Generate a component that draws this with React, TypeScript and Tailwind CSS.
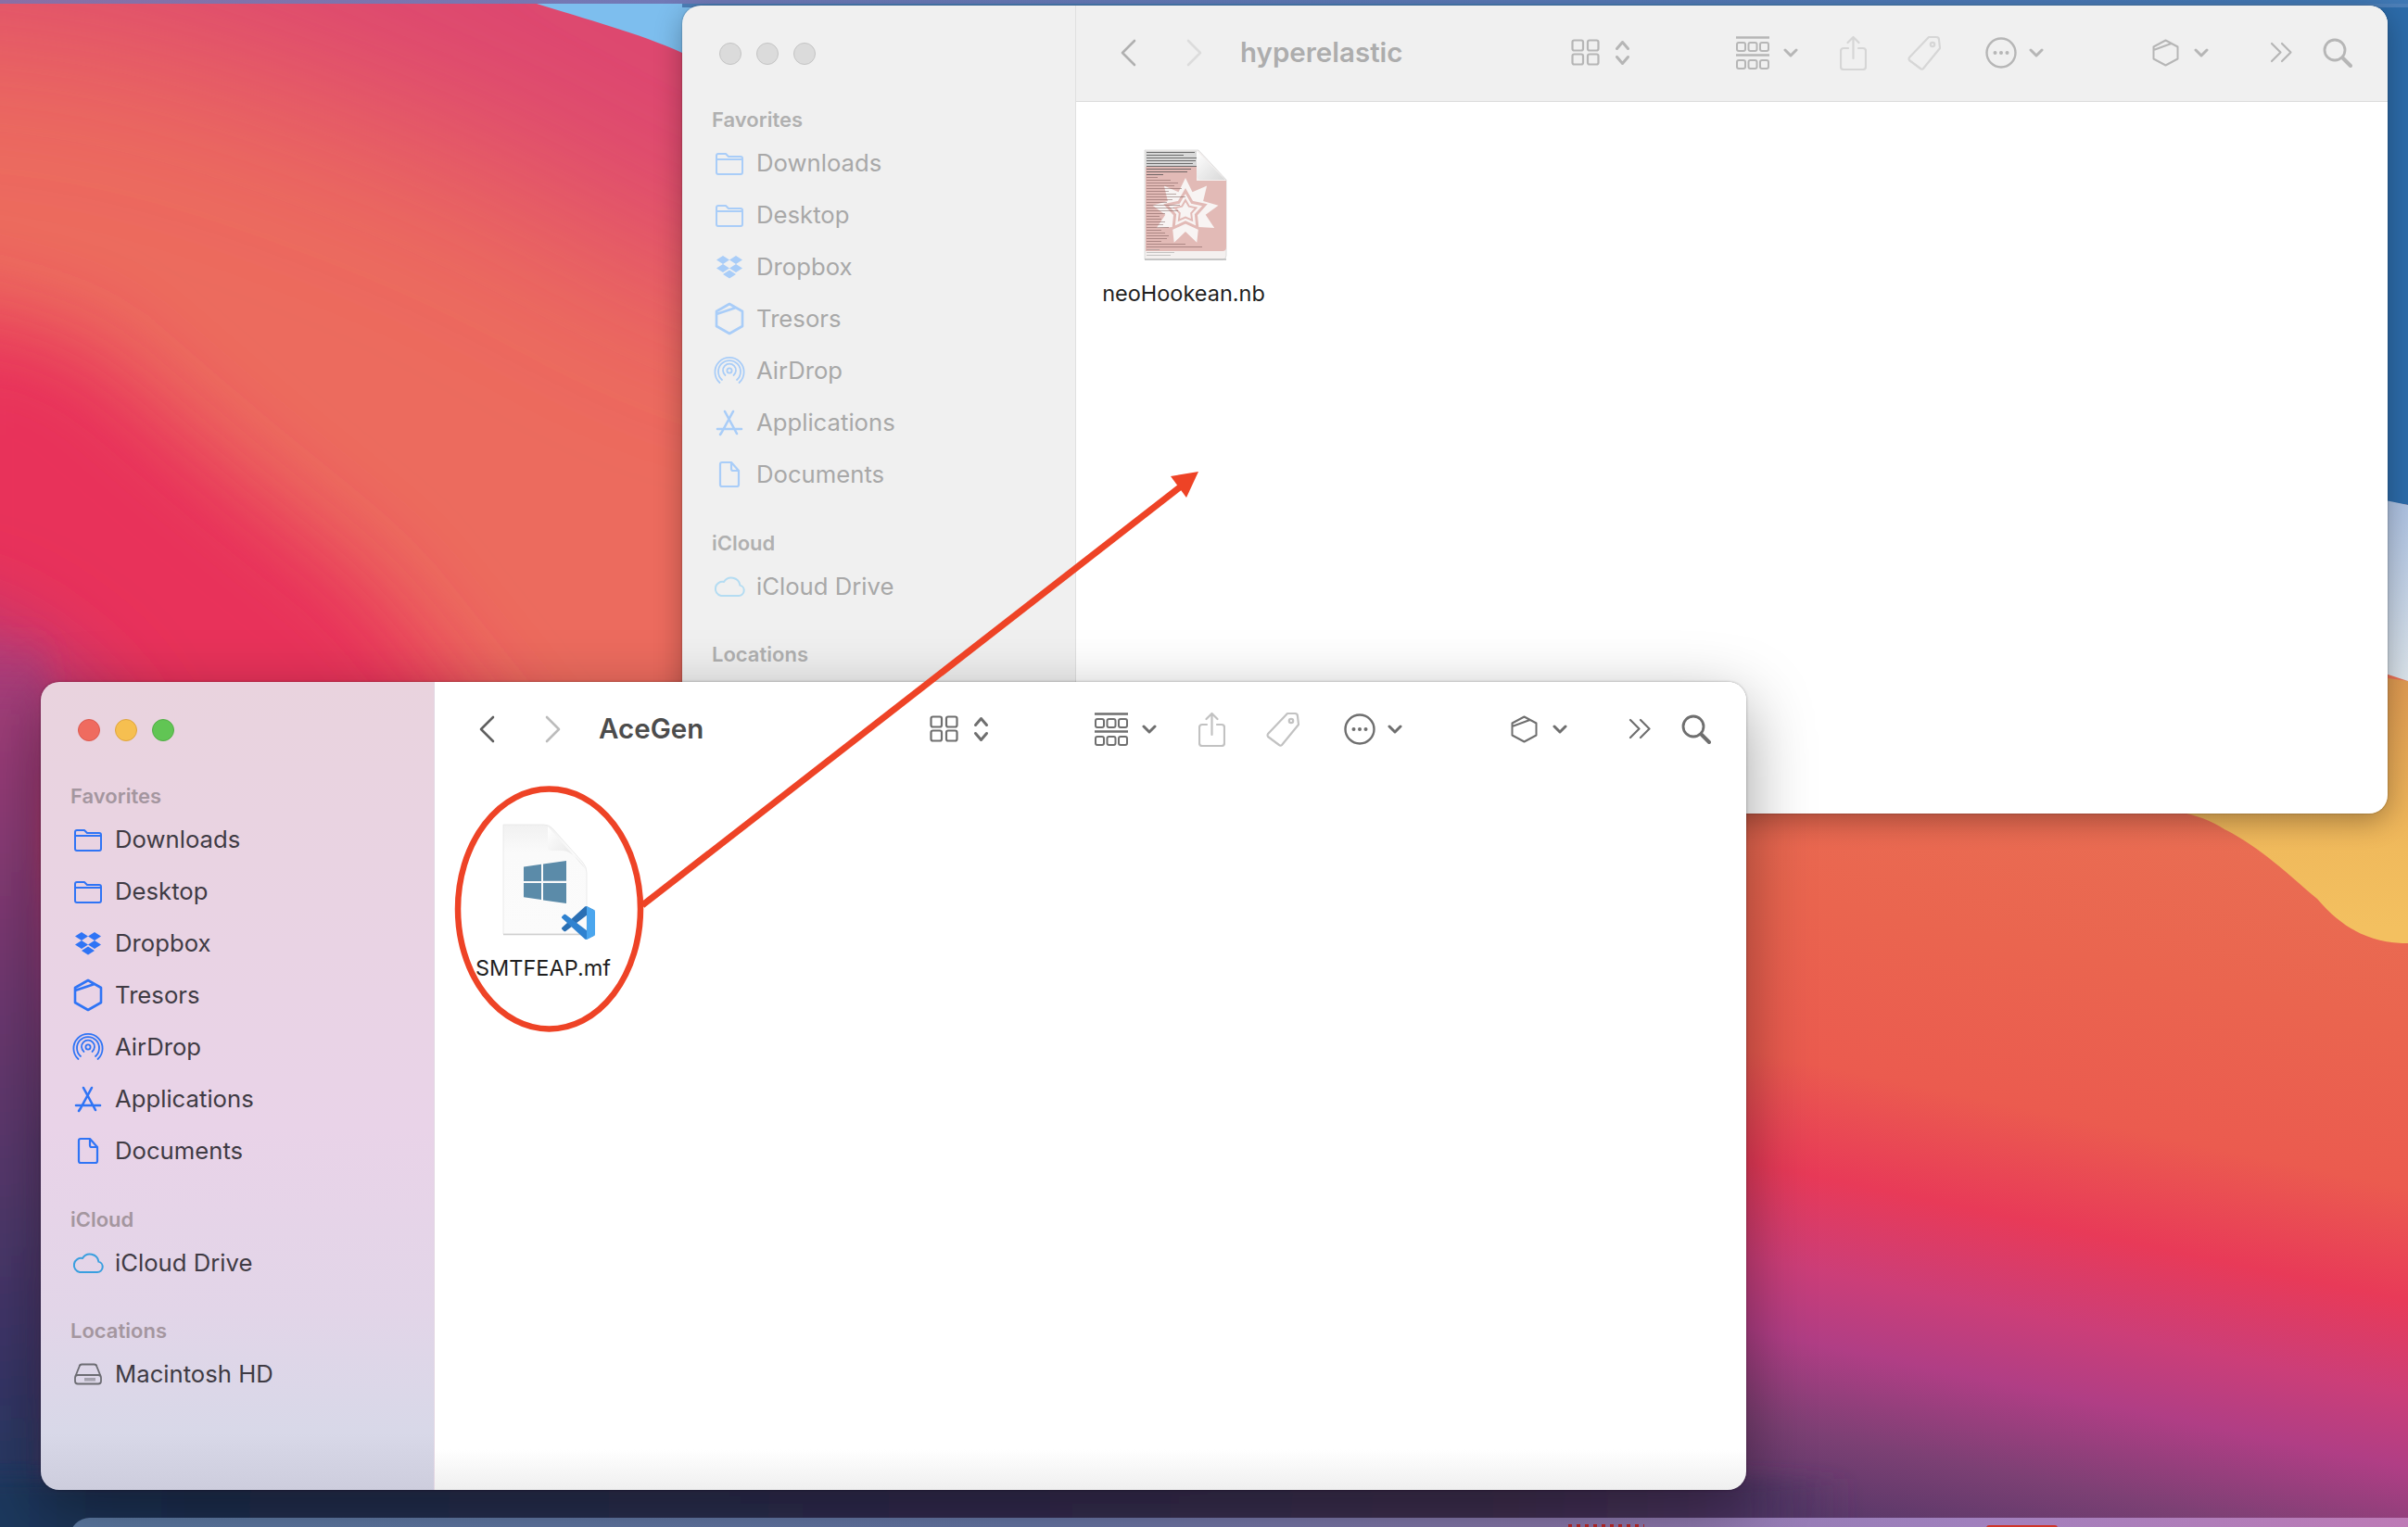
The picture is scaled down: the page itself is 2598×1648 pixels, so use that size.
import React from "react";

type Active = { active: boolean };

const Folder = () => (
  <svg width="40" height="40" viewBox="0 0 40 40" fill="none" stroke="currentColor" strokeWidth="2">
    <path d="M6 12a2 2 0 0 1 2-2h8l3 3h13a2 2 0 0 1 2 2v15a2 2 0 0 1-2 2H8a2 2 0 0 1-2-2zM6 16h28" strokeLinejoin="round" />
  </svg>
);
const Dropbox = () => (
  <svg width="40" height="40" viewBox="0 0 40 40" fill="currentColor">
    <path d="M13 8l7 4.5-7 4.5-7-4.5zM27 8l7 4.5-7 4.5-7-4.5zM13 17l7 4.5-7 4.5-7-4.5zM27 17l7 4.5-7 4.5-7-4.5zM20 23.5l7 4.5-7 4.5-7-4.5z" />
  </svg>
);
const Tresors = () => (
  <svg width="40" height="40" viewBox="0 0 40 40" fill="none" stroke="currentColor" strokeWidth="2.6" strokeLinejoin="round">
    <path d="M20 4l14 8v16l-14 8-14-8V12zM6 15l21-7" />
  </svg>
);
const AirDrop = () => (
  <svg width="40" height="40" viewBox="0 0 40 40" fill="none" stroke="currentColor" strokeWidth="1.8" strokeLinecap="round">
    <circle cx="20" cy="20" r="2.6" />
    <path d="M15.5 25a7 7 0 1 1 9 0M12 30a12 12 0 1 1 16 0M9.5 33a15.6 15.6 0 1 1 21 0" />
  </svg>
);
const Apps = () => (
  <svg width="40" height="40" viewBox="0 0 40 40" fill="none" stroke="currentColor" strokeWidth="2.6" strokeLinecap="round">
    <path d="M15 8l13 24M24 8L12 30M7 27h26M10 33l2-3" />
  </svg>
);
const Doc = () => (
  <svg width="40" height="40" viewBox="0 0 40 40" fill="none" stroke="currentColor" strokeWidth="2.2" strokeLinejoin="round">
    <path d="M10 9a2 2 0 0 1 2-2h10l8 9v15a2 2 0 0 1-2 2H12a2 2 0 0 1-2-2zM22 7v7a2 2 0 0 0 2 2h6" />
  </svg>
);
const Cloud = () => (
  <svg width="40" height="40" viewBox="0 0 40 40" fill="none" stroke="currentColor" strokeWidth="2">
    <path d="M11 30h19a5.8 5.8 0 0 0 1.4-11.4A9.5 9.5 0 0 0 14 15a7.6 7.6 0 0 0-3 15z" />
  </svg>
);
const Disk = () => (
  <svg width="40" height="40" viewBox="0 0 40 40" fill="none" stroke="currentColor" strokeWidth="1.8">
    <path d="M6.5 22l4-10a3 3 0 0 1 3-2.500h13a3 3 0 0 1 3 2.500l4 10" />
    <rect x="6" y="21" width="28" height="9.500" rx="3" />
    <path d="M17 24v3.500M19 24v3.500M21 24v3.500M23 24v3.500M25 24v3.500M27 24v3.500" strokeWidth="1" />
  </svg>
);

const favorites: [string, React.FC][] = [
  ["Downloads", Folder],
  ["Desktop", Folder],
  ["Dropbox", Dropbox],
  ["Tresors", Tresors],
  ["AirDrop", AirDrop],
  ["Applications", Apps],
  ["Documents", Doc],
];

function Heading({ label, active, className }: Active & { label: string; className?: string }) {
  return (
    <div
      className={`h-[37px] flex items-center pl-[32px] text-[22px] font-semibold ${className ?? ""} ${
        active ? "text-[#a4969f]" : "text-[#b0b0b0]"
      }`}
    >
      {label}
    </div>
  );
}

function Row({ label, Icon, active, tone }: Active & { label: string; Icon: React.FC; tone?: "cloud" | "disk" }) {
  const iconColor = active
    ? tone === "cloud"
      ? "text-[#3a9fdf]"
      : tone === "disk"
        ? "text-[#6c6c72]"
        : "text-[#2f74f5]"
    : tone === "cloud"
      ? "text-[#b4dcf2]"
      : tone === "disk"
        ? "text-[#bdbdbd]"
        : "text-[#a9cdf8]";
  return (
    <div className={`h-[56px] flex items-center pl-[31px] text-[25.700px] ${active ? "text-[#3f3b44]" : "text-[#a8a8a8]"}`}>
      <span className={`w-[40px] h-[40px] shrink-0 ${iconColor}`}>
        <Icon />
      </span>
      <span className="ml-[9px] pt-[1px] whitespace-nowrap">{label}</span>
    </div>
  );
}

function Sidebar({ active }: Active) {
  return (
    <aside
      className={`w-[425px] shrink-0 border-r flex flex-col ${
        active
          ? "border-[#e2d6e2] bg-[linear-gradient(180deg,#e9d3de_0%,#e9d3e8_55%,#e2d5e8_78%,#d8d8e8_93%,#cdcddd_100%)]"
          : "border-[#e0e0e0] bg-[#f0f0f0]"
      }`}
    >
      <div className="h-[105px] pl-[40px] pb-[2px] flex items-center gap-[16px]">
        <span className={`w-[24px] h-[24px] rounded-full border ${active ? "bg-[#ef6b5f] border-[#dc5a50]" : "bg-[#dbdbdb] border-[#c4c4c4]"}`} />
        <span className={`w-[24px] h-[24px] rounded-full border ${active ? "bg-[#f6bf50] border-[#dfa53e]" : "bg-[#dbdbdb] border-[#c4c4c4]"}`} />
        <span className={`w-[24px] h-[24px] rounded-full border ${active ? "bg-[#61c554] border-[#52ae46]" : "bg-[#dbdbdb] border-[#c4c4c4]"}`} />
      </div>
      <Heading label="Favorites" active={active} />
      {favorites.map(([label, Icon]) => (
        <Row key={label} label={label} Icon={Icon} active={active} />
      ))}
      <Heading label="iCloud" active={active} className="mt-[28px]" />
      <Row label="iCloud Drive" Icon={Cloud} active={active} tone="cloud" />
      <Heading label="Locations" active={active} className="mt-[27px]" />
      <Row label="Macintosh HD" Icon={Disk} active={active} tone="disk" />
    </aside>
  );
}

const Chev = ({ className }: { className?: string }) => (
  <svg width="16" height="10" viewBox="0 0 16 10" fill="none" stroke="currentColor" strokeWidth="3" strokeLinecap="round" strokeLinejoin="round" className={className}>
    <path d="M2 2l6 6 6-6" />
  </svg>
);

function Toolbar({ title, active }: Active & { title: string }) {
  const main = active ? "text-[#6f6f6f]" : "text-[#b6b6b6]";
  const dim = active ? "text-[#c2c2c2]" : "text-[#d6d6d6]";
  return (
    <header className={`h-[104px] shrink-0 pb-[2px] pl-[47px] flex items-center border-b ${active ? "border-white bg-white" : "border-[#dcdcdc] bg-[#f0f0f0]"}`}>
      <svg width="18" height="30" viewBox="0 0 18 30" fill="none" stroke="currentColor" strokeWidth="2.600" strokeLinecap="round" strokeLinejoin="round" className={active ? "text-[#606060]" : "text-[#b0b0b0]"}>
        <path d="M16 2L3 15l13 13" />
      </svg>
      <svg width="18" height="30" viewBox="0 0 18 30" fill="none" stroke="currentColor" strokeWidth="2.600" strokeLinecap="round" strokeLinejoin="round" className={`ml-[54px] ${active ? "text-[#bcbcbc]" : "text-[#dcdcdc]"}`}>
        <path d="M2 2l13 13L2 28" />
      </svg>
      <div className={`ml-[40px] w-[357px] text-[29.500px] font-semibold leading-none pt-[1px] ${active ? "text-[#4c4c4c]" : "text-[#adadad]"}`}>{title}</div>
      <svg width="31" height="29" viewBox="0 0 31 29" fill="none" stroke="currentColor" strokeWidth="2.200" className={main}>
        <rect x="1.500" y="1.500" width="11.500" height="11" rx="2" />
        <rect x="18" y="1.500" width="11.500" height="11" rx="2" />
        <rect x="1.500" y="16.500" width="11.500" height="11" rx="2" />
        <rect x="18" y="16.500" width="11.500" height="11" rx="2" />
      </svg>
      <svg width="17" height="28" viewBox="0 0 17 28" fill="none" stroke="currentColor" strokeWidth="3" strokeLinecap="round" strokeLinejoin="round" className={`ml-[16px] ${main}`}>
        <path d="M2.500 9.500l6-7 6 7M2.500 18.500l6 7 6-7" />
      </svg>
      <svg width="36" height="36" viewBox="0 0 36 36" fill="none" stroke="currentColor" strokeWidth="2" className={`ml-[114px] ${main}`}>
        <path d="M0 1.500h36M0 20.500h36" strokeWidth="2.400" />
        <rect x="1" y="7" width="9" height="9" rx="2" />
        <rect x="13.500" y="7" width="9" height="9" rx="2" />
        <rect x="26" y="7" width="9" height="9" rx="2" />
        <rect x="1" y="26" width="9" height="9" rx="2" />
        <rect x="13.500" y="26" width="9" height="9" rx="2" />
        <rect x="26" y="26" width="9" height="9" rx="2" />
      </svg>
      <span className={`ml-[15px] ${main}`}><Chev /></span>
      <svg width="29" height="38" viewBox="0 0 29 38" fill="none" stroke="currentColor" strokeWidth="2.200" strokeLinecap="round" strokeLinejoin="round" className={`ml-[45px] ${dim}`}>
        <path d="M9 14H4a3 3 0 0 0-3 3v17a3 3 0 0 0 3 3h21a3 3 0 0 0 3-3V17a3 3 0 0 0-3-3h-5M14.500 25V2M8.500 8l6-6 6 6" />
      </svg>
      <svg width="36" height="38" viewBox="0 0 36 38" fill="none" stroke="currentColor" strokeWidth="2.200" strokeLinejoin="round" className={`ml-[44px] ${dim}`}>
        <path d="M23 2h8a3 3 0 0 1 3 3l1 9-18 22a2 2 0 0 1-3 0L2 27a3 3 0 0 1 0-3z" />
        <circle cx="27" cy="10" r="2.200" />
      </svg>
      <svg width="34" height="34" viewBox="0 0 34 34" fill="none" className={`ml-[48px] ${main}`}>
        <circle cx="17" cy="17" r="15.500" stroke="currentColor" strokeWidth="2.400" />
        <circle cx="10.500" cy="17" r="2" fill="currentColor" />
        <circle cx="17" cy="17" r="2" fill="currentColor" />
        <circle cx="23.500" cy="17" r="2" fill="currentColor" />
      </svg>
      <span className={`ml-[13px] ${main}`}><Chev /></span>
      <svg width="29" height="30" viewBox="0 0 29 30" fill="none" stroke="currentColor" strokeWidth="2" strokeLinejoin="round" className={`ml-[117px] ${main}`}>
        <path d="M14.500 1.500l13 7v13l-13 7-13-7v-13zM1.500 12l19-7" />
      </svg>
      <span className={`ml-[16px] ${main}`}><Chev /></span>
      <svg width="25" height="23" viewBox="0 0 25 23" fill="none" stroke="currentColor" strokeWidth="2.200" strokeLinecap="round" strokeLinejoin="round" className={`ml-[66px] ${main}`}>
        <path d="M2 2l9.500 9.500L2 21M13 2l9.500 9.500L13 21" />
      </svg>
      <svg width="32" height="32" viewBox="0 0 32 32" fill="none" stroke="currentColor" strokeLinecap="round" className={`ml-[32px] ${main}`}>
        <circle cx="13" cy="13" r="11" strokeWidth="2.800" />
        <path d="M21.500 21.500L30 30" strokeWidth="4" />
      </svg>
    </header>
  );
}

function FileItem({ name, children }: { name: string; children: React.ReactNode }) {
  return (
    <div className="w-[190px] flex flex-col items-center">
      <div className="w-[120px] h-[140px]">{children}</div>
      <div className="text-[23.500px] leading-[30px] text-[#1f1f1f] whitespace-nowrap">{name}</div>
    </div>
  );
}

const WinDocIcon = () => (
  <svg width="120" height="140" viewBox="526 890 120 140" overflow="visible">
    <defs>
      <linearGradient id="page" x1="0" y1="0" x2="0" y2="1">
        <stop offset="0" stopColor="#f1f1f1" />
        <stop offset="0.25" stopColor="#fafafa" />
        <stop offset="1" stopColor="#fbfbfb" />
      </linearGradient>
      <linearGradient id="fold" x1="0" y1="0" x2="1" y2="1">
        <stop offset="0" stopColor="#ffffff" />
        <stop offset="1" stopColor="#dcdcdc" />
      </linearGradient>
    </defs>
    <path d="M543 890h44q6 0 10 5l32 36q4 5 4 11v66h-90z" fill="url(#page)" stroke="#e6e6e6" strokeWidth="0.800" />
    <path d="M543 1008.500h90" stroke="#cfcfcf" strokeWidth="1.600" />
    <path d="M591 892v22q0 4 4 4h11q12 0 26 20z" fill="url(#fold)" />
    <path d="M565 935.500l19 -2.800v18.300h-19zM586 932.400l25 -3.400v21.800h-25zM565 953h19v18l-19 -2.800zM586 953h25v22l-25 -3.600z" fill="#5b8ba9" />
    <g transform="translate(606 978) scale(0.36)">
      <path d="M96.46 10.8L75.86.88C73.47-.27 70.62.21 68.75 2.08L1.3 63.58c-1.82 1.66-1.81 4.51 0 6.16l5.51 5.01c1.49 1.35 3.72 1.45 5.32.24L93.36 13.37C96.09 11.3 100 13.25 100 16.67v-.24c0-2.4-1.38-4.59-3.54-5.63z" fill="#2a6fb3" />
      <path d="M96.46 89.2L75.86 99.12c-2.39 1.15-5.24.67-7.11-1.2L1.3 36.42c-1.82-1.66-1.81-4.51 0-6.16l5.51-5.01c1.49-1.35 3.72-1.45 5.32-.24l81.23 61.62c2.73 2.07 6.64.12 6.64-3.3v.24c0 2.4-1.38 4.59-3.54 5.63z" fill="#2f82d0" />
      <path d="M75.86 99.13c-2.39 1.15-5.24.66-7.11-1.21C71.06 100.22 75 98.59 75 95.33V4.67c0-3.26-3.94-4.89-6.25-2.59C70.62.21 73.47-.27 75.86.87l20.6 9.91C98.62 11.82 100 14.01 100 16.41v67.18c0 2.4-1.38 4.59-3.54 5.63z" fill="#4ba6ee" />
    </g>
  </svg>
);

const starPath = (cx: number, cy: number, outer: number, inner: number, n: number) =>
  Array.from({ length: n * 2 }, (_, i) => {
    const r = i % 2 === 0 ? outer : inner;
    const a = -Math.PI / 2 + (i * Math.PI) / n;
    return `${i === 0 ? "M" : "L"}${(cx + r * Math.cos(a)).toFixed(1)} ${(cy + r * Math.sin(a)).toFixed(1)}`;
  }).join("") + "Z";

const lines = [52, 40, 54, 53, 50, 54, 48, 44, 18, 12, 26, 34, 30, 38, 24, 32, 42, 28, 22, 36, 30, 34, 20, 14, 16, 20, 18, 24, 16, 20, 24, 22, 16, 42, 60, 14, 30, 26];

const NbDocIcon = () => (
  <svg width="120" height="140" viewBox="1218 162 120 140" overflow="visible">
    <defs>
      <linearGradient id="fold2" x1="0" y1="0" x2="1" y2="1">
        <stop offset="0" stopColor="#ffffff" />
        <stop offset="1" stopColor="#d8d8d8" />
      </linearGradient>
    </defs>
    <path d="M1236 162h58l30 32v82q0 4-4 4h-84z" fill="#f4f0ef" stroke="#d6d6d6" strokeWidth="0.800" />
    <rect x="1237" y="163" width="55" height="17" fill="#d8d8d8" />
    <path d="M1237 180h55v15h32v72q0 4-4 4h-83z" fill="#e2bab6" />
    <path d={starPath(1280, 228, 36, 22, 9)} fill="#f8f4f3" />
    <path d={starPath(1280, 228, 22, 12, 5)} fill="none" stroke="#e2bab6" strokeWidth="3" />
    <path d={starPath(1280, 228, 12, 6.5, 5)} fill="none" stroke="#e2bab6" strokeWidth="2" />
    {lines.map((w, i) => (
      <rect key={i} x="1238" y={164 + i * 3} width={w} height="1" fill={i < 9 ? "#4a4a4a" : i > 34 ? "#8a8a8a" : "#6a4a48"} opacity={i < 9 ? 0.75 : 0.45} />
    ))}
    <path d="M1236 280h88" stroke="#b9b9b9" strokeWidth="1.600" />
    <path d="M1292 163v26q0 5 5 5h26z" fill="url(#fold2)" />
  </svg>
);

function Finder({ title, active, className, children }: Active & { title: string; className: string; children: React.ReactNode }) {
  return (
    <section className={`absolute w-[1840px] h-[872px] rounded-[20px] overflow-hidden flex ${className}`}>
      <Sidebar active={active} />
      <div className={`flex-1 flex flex-col ${active ? "bg-[linear-gradient(180deg,#ffffff_0%,#ffffff_95%,#efefef_100%)]" : "bg-white"}`}>
        <Toolbar title={title} active={active} />
        <div className={active ? "pt-[50px] pl-[22px]" : "pt-[52px] pl-[21px]"}>{children}</div>
      </div>
    </section>
  );
}

function Wallpaper() {
  return (
    <svg className="absolute inset-0 w-full h-full" viewBox="0 0 2598 1648" preserveAspectRatio="none">
      <defs>
        <linearGradient id="wpRight" gradientUnits="userSpaceOnUse" x1="2200" y1="800" x2="2022" y2="1650">
          <stop offset="0" stopColor="#e97054" />
          <stop offset="0.25" stopColor="#ea654f" />
          <stop offset="0.45" stopColor="#eb5b4f" />
          <stop offset="0.586" stopColor="#e83a58" />
          <stop offset="0.70" stopColor="#cc3e78" />
          <stop offset="0.79" stopColor="#b03e85" />
          <stop offset="0.90" stopColor="#7c4074" />
          <stop offset="1" stopColor="#583868" />
        </linearGradient>
        <linearGradient id="wpLeft" x1="0" y1="0" x2="0" y2="1">
          <stop offset="0" stopColor="#a83c78" stopOpacity="0" />
          <stop offset="0.08" stopColor="#a03c78" />
          <stop offset="0.4" stopColor="#6e386f" />
          <stop offset="0.6" stopColor="#55386c" />
          <stop offset="0.8" stopColor="#3a3566" />
          <stop offset="1" stopColor="#1c3a62" />
        </linearGradient>
        <linearGradient id="wpBottom" x1="0" y1="0" x2="1" y2="0">
          <stop offset="0" stopColor="#1e3a60" />
          <stop offset="0.12" stopColor="#1e2e50" />
          <stop offset="0.5" stopColor="#302c50" />
          <stop offset="0.82" stopColor="#3f2d50" />
          <stop offset="0.94" stopColor="#4a3360" />
          <stop offset="1" stopColor="#4a3360" stopOpacity="0" />
        </linearGradient>
        <linearGradient id="wpTopStrip" x1="0" y1="0" x2="1" y2="0">
          <stop offset="0" stopColor="#8a6fa5" />
          <stop offset="0.3" stopColor="#6f7ab8" />
          <stop offset="1" stopColor="#3f78b4" />
        </linearGradient>
        <linearGradient id="wpPale" x1="0" y1="0" x2="0" y2="1">
          <stop offset="0" stopColor="#aabfe0" />
          <stop offset="1" stopColor="#dae3ea" />
        </linearGradient>
        <linearGradient id="wpSand" gradientUnits="userSpaceOnUse" x1="2500" y1="723" x2="2500" y2="1000">
          <stop offset="0" stopColor="#dd9850" />
          <stop offset="0.7" stopColor="#f0ba5c" />
          <stop offset="1" stopColor="#f3c060" />
        </linearGradient>
        <filter id="b90" x="-50%" y="-50%" width="200%" height="200%"><feGaussianBlur stdDeviation="95" /></filter>
        <filter id="b50" x="-50%" y="-50%" width="200%" height="200%"><feGaussianBlur stdDeviation="48" /></filter>
        <filter id="b12" x="-100%" y="-20%" width="300%" height="140%"><feGaussianBlur stdDeviation="14" /></filter>
        <filter id="b10" x="-5%" y="-60%" width="110%" height="220%"><feGaussianBlur stdDeviation="10" /></filter>
        <clipPath id="leftClip"><rect x="0" y="0" width="860" height="1648" /></clipPath>
      </defs>
      <rect width="2598" height="1648" fill="url(#wpRight)" />
      <g clipPath="url(#leftClip)">
        <rect x="0" y="0" width="860" height="800" fill="#ec6b5e" />
        <path d="M-200 -200H1000V360L760 300L520 170L260 70L60 20L-200 10Z" fill="#dd4670" filter="url(#b90)" />
        <path d="M-100 320L90 370L240 500L400 630L600 880L-100 900Z" fill="#e8305a" filter="url(#b50)" />
        <path d="M-120 650L-10 670L90 740L170 860L-120 880Z" fill="#a83e7c" filter="url(#b50)" />
        <rect x="-40" y="680" width="90" height="980" fill="url(#wpLeft)" filter="url(#b12)" />
      </g>
      <rect x="-40" y="1596" width="2040" height="90" fill="url(#wpBottom)" filter="url(#b10)" />
      <path d="M2350 700L2598 735V1018C2560 1018 2530 1005 2500 970C2470 945 2440 915 2400 895C2385 885 2370 880 2350 876Z" fill="url(#wpSand)" />
      <path d="M2500 0H2598V545L2500 530Z" fill="#2c6ba9" />
      <path d="M2540 533L2598 545V735L2540 716Z" fill="url(#wpPale)" />
      <path d="M579 4H800V80L736 57C690 36 630 20 579 4Z" fill="#7dbeee" />
      <rect x="736" y="0" width="1862" height="8" fill="#4c7fb8" />
      <rect x="0" y="0" width="2598" height="4" fill="url(#wpTopStrip)" />
    </svg>
  );
}

function Dock() {
  return (
    <div className="absolute left-[75px] top-[1638px] right-[-40px] h-[40px] rounded-t-[22px] bg-[linear-gradient(90deg,#5e7ca6_0%,#6878a8_40%,#8a78ac_62%,#a080bd_80%,#c07ab5_100%)]">
      <div className="absolute left-[1617px] top-[7px] w-[82px] h-[3px] bg-[repeating-linear-gradient(90deg,#c02a2a_0,#c02a2a_4px,transparent_4px,transparent_9px)]" />
      <div className="absolute left-[2068px] top-[8px] w-[77px] h-[4px] rounded-t-[3px] bg-[#d0352a]" />
    </div>
  );
}

export default function App() {
  return (
    <main className="relative w-[2598px] h-[1648px] overflow-hidden [font-family:Inter,'Noto_Sans',sans-serif] antialiased">
      <Wallpaper />
      <Dock />
      <Finder title="hyperelastic" active={false} className="left-[736px] top-[6px] shadow-[0_8px_30px_rgba(0,0,0,0.3),0_0_2px_rgba(0,0,0,0.4)]">
        <FileItem name="neoHookean.nb"><NbDocIcon /></FileItem>
      </Finder>
      <Finder title="AceGen" active className="left-[44px] top-[736px] shadow-[0_22px_70px_rgba(0,0,0,0.38),0_0_3px_rgba(0,0,0,0.35)]">
        <FileItem name="SMTFEAP.mf"><WinDocIcon /></FileItem>
      </Finder>
      <svg className="absolute inset-0 w-full h-full pointer-events-none" viewBox="0 0 2598 1648" fill="none">
        <ellipse cx="592.500" cy="981" rx="98.500" ry="129.500" stroke="#ee4326" strokeWidth="6.500" />
        <path d="M693 977L1274 525" stroke="#ee4326" strokeWidth="7" />
        <path d="M1293 509L1263 514L1280 537Z" fill="#ee4326" />
      </svg>
    </main>
  );
}
